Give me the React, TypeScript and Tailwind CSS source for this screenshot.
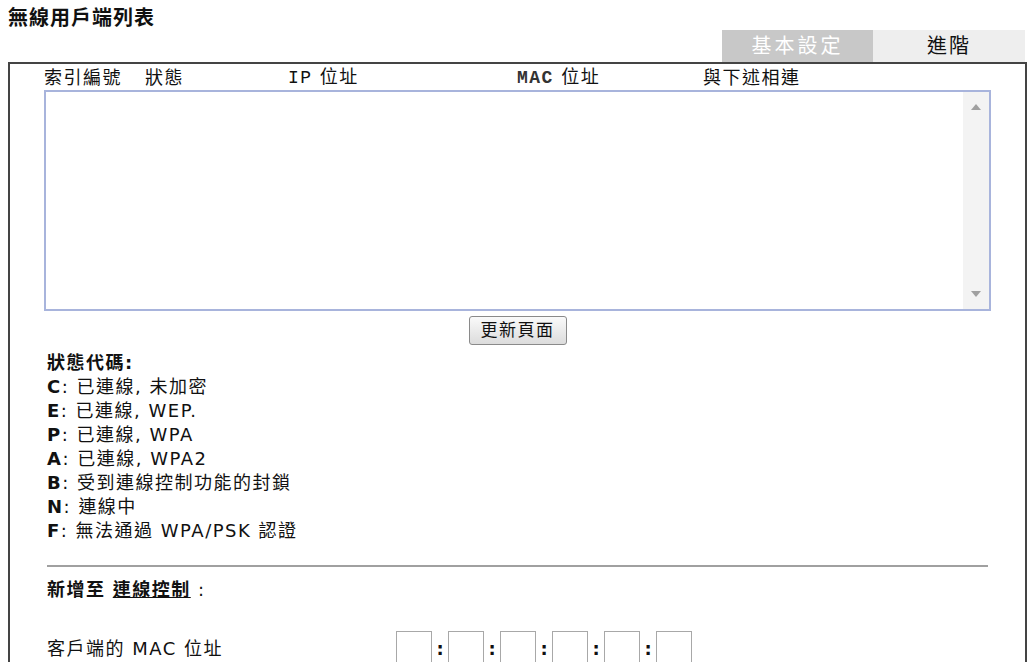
import React from "react"

// status code legend
const codes = [
  { k: "C", t: "已連線, 未加密" },
  { k: "E", t: "已連線, WEP." },
  { k: "P", t: "已連線, WPA" },
  { k: "A", t: "已連線, WPA2" },
  { k: "B", t: "受到連線控制功能的封鎖" },
  { k: "N", t: "連線中" },
  { k: "F", t: "無法通過 WPA/PSK 認證" },
]

const font = "font-['DejaVu_Sans','Noto_Sans_CJK_TC',sans-serif]"
const mono = "font-['Liberation_Mono','Noto_Sans_CJK_TC',monospace]"

export default function App() {
  return (
    <div className={`w-[1031px] h-[662px] overflow-hidden bg-white text-[#111] flex flex-col ${font}`}>
      {/* Title */}
      <div className="h-[33px] pl-[8px] pt-[6px] text-[20px] leading-[24px] font-bold tracking-[1px]">
        無線用戶端列表
      </div>

      {/* Tabs */}
      <div className="h-[34px] flex justify-end pr-[6px]">
        <div className="w-[151px] h-[32px] bg-[#c8c8c8] text-white text-[20px] tracking-[3px] flex items-center justify-center">
          基本設定
        </div>
        <div className="w-[152px] h-[32px] bg-[#eeeeee] text-[20px] tracking-[2px] flex items-center justify-center">
          進階
        </div>
      </div>

      {/* Panel */}
      <div className="ml-[8px] w-[1019px] flex-1 border-2 border-b-0 border-[#444] flex flex-col">
        <div className="h-[26px] pl-[34px] flex items-center text-[18px] tracking-[1.5px]">
          <span className="w-[101px]">索引編號</span>
          <span className="w-[143px]">狀態</span>
          <span className="w-[229px]"><span className={mono}>IP</span> 位址</span>
          <span className="w-[186px]"><span className={`${mono} font-bold text-[#333]`}>MAC</span> 位址</span>
          <span>與下述相連</span>
        </div>

        {/* client list box */}
        <div className="ml-[34px] w-[947px] h-[221px] border-2 border-[#a8b4dc] flex justify-end">
          <div className="w-[26px] h-full bg-[#f3f3f3] flex flex-col items-center justify-between py-[12px]">
            <svg width="10" height="6" viewBox="0 0 10 6"><path d="M0 6 L5 0 L10 6 Z" fill="#a0a0a0" /></svg>
            <svg width="10" height="6" viewBox="0 0 10 6"><path d="M0 0 L5 6 L10 0 Z" fill="#a0a0a0" /></svg>
          </div>
        </div>

        <div className="mt-[5px] flex justify-center">
          <button className="w-[98px] h-[29px] border border-[#8a8a8a] rounded-[3px] bg-gradient-to-b from-[#fafafa] to-[#dcdcdc] text-[17px] tracking-[1.5px] leading-none flex items-center justify-center">
            更新頁面
          </button>
        </div>

        {/* Legend */}
        <div className="mt-[6px] pl-[37px] text-[18px] leading-[24px] tracking-[1.5px]">
          <div className="font-bold">狀態代碼:</div>
          {codes.map((c) => (
            <div key={c.k}>
              <b>{c.k}</b>: {c.t}
            </div>
          ))}
        </div>

        <div className="mt-[22px] ml-[37px] w-[941px] h-[2px] bg-[#a0a0a0]" />

        <div className="mt-[11px] pl-[37px] text-[18px] leading-[24px] tracking-[1.5px]">
          <b>新增至</b> <b className="underline">連線控制</b> :
        </div>

        <div className="mt-[29px] pl-[37px] flex items-start text-[18px] leading-[24px] tracking-[1.5px]">
          <span className="w-[349px] pt-[6px]">客戶端的 MAC 位址</span>
          <div className="flex items-start">
            {[0, 1, 2, 3, 4, 5].map((i) => (
              <React.Fragment key={i}>
                {i > 0 && <span className="w-[16px] pt-[6px] text-center font-bold tracking-normal">:</span>}
                <div className="w-[36px] h-[34px] border border-[#a8a8a8]" />
              </React.Fragment>
            ))}
          </div>
        </div>
      </div>
    </div>
  )
}
